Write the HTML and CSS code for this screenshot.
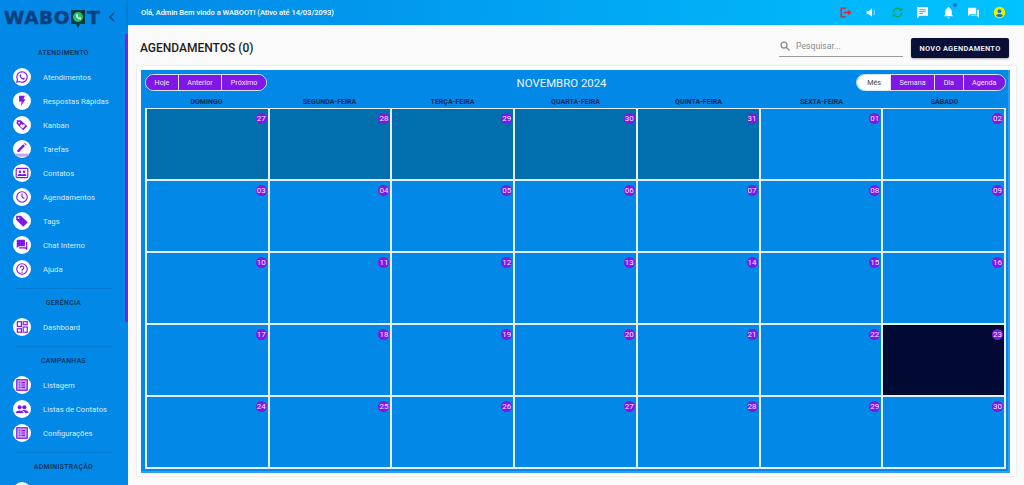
FILE: index.html
```html
<!DOCTYPE html>
<html lang="pt-BR">

<head>
    <meta charset="UTF-8">
    <meta name="viewport" content="width=device-width, initial-scale=1.0">
    <title>Agendamentos</title>
    <link rel="stylesheet" href="styles.css">
</head>

<body>
    <div class="app">
        <aside class="sidebar">
            <div class="brand">
                <span class="logo">WABO<svg class="logo-pin" viewBox="0 0 16 20"><path d="M1 1h14v14h-5l-2 4-2-4H1z" fill="#0b3b3a"/><circle cx="8" cy="8" r="5" fill="#25c26e"/><path d="M6 5.5c0 3 1.5 4.500 4.500 5l.8-1.500-1.600-.8-.7.600c-.7-.3-1.200-.8-1.500-1.500l.6-.7-.8-1.600z" fill="#fff"/></svg>T</span>
                <svg class="chevron" viewBox="0 0 8 10"><path d="M6 1 2 5l4 4" fill="none" stroke="#0b4a80" stroke-width="1.5"/></svg>
            </div>
            <div class="menu-scroll">
                <div class="menu-group first">
                    <div class="menu-title">ATENDIMENTO</div>
                    <a class="menu-item"><span class="menu-icon"><svg viewBox="0 0 24 24"><path d="M12 3a9 9 0 0 0-7.700 13.600L3 21l4.500-1.200A9 9 0 1 0 12 3z" fill="none" stroke="#8117e6" stroke-width="2"/><path d="M9 7.500c-1.500 1-1.500 2.700 0 5s3.500 4 5.500 4c1.500 0 2.500-1 2.500-2l-2.500-1.300-1 1c-1.500-.6-2.700-1.800-3.300-3.200l1-1L10 7.500z" fill="#8117e6"/></svg></span>Atendimentos</a>
                    <a class="menu-item"><span class="menu-icon"><svg viewBox="0 0 24 24"><path d="M7 3h10l-2.500 6H18l-8 12 1.500-8H7z" fill="#8117e6"/></svg></span>Respostas Rápidas</a>
                    <a class="menu-item"><span class="menu-icon"><svg viewBox="0 0 24 24"><path d="M3 10V4h7l11 10-7 7z" fill="#8117e6"/><circle cx="7" cy="8" r="1.500" fill="#fff"/><path d="M13 18l-3.500-3.500a2 2 0 0 1 3-3l.5.500.5-.5a2 2 0 0 1 3 3z" fill="#fff"/></svg></span>Kanban</a>
                    <a class="menu-item"><span class="menu-icon"><svg viewBox="0 0 24 24"><path d="M4 17v-3L14 4l3 3L7 17zM15.500 2.500l1.500-1 3 3-1 1.500z" fill="#8117e6"/><rect x="-2" y="20" width="28" height="5" fill="#c9a0f2"/></svg></span>Tarefas</a>
                    <a class="menu-item"><span class="menu-icon"><svg viewBox="0 0 24 24"><rect x="2" y="4" width="20" height="16" rx="2" fill="none" stroke="#8117e6" stroke-width="2"/><circle cx="8.500" cy="10" r="2.200" fill="#8117e6"/><circle cx="15.500" cy="10" r="2.200" fill="#8117e6"/><path d="M4.500 17c0-5 8-5 8 0zM11.500 17c0-5 8-5 8 0z" fill="#8117e6"/></svg></span>Contatos</a>
                    <a class="menu-item"><span class="menu-icon"><svg viewBox="0 0 24 24"><circle cx="12" cy="12" r="9" fill="none" stroke="#8117e6" stroke-width="2"/><path d="M12 6.500V12l4 2.500" fill="none" stroke="#8117e6" stroke-width="2"/></svg></span>Agendamentos</a>
                    <a class="menu-item"><span class="menu-icon"><svg viewBox="0 0 24 24"><path d="M2 10V3h8l12 11-8 8z" fill="#8117e6"/><circle cx="6" cy="7" r="1.600" fill="#fff"/></svg></span>Tags</a>
                    <a class="menu-item"><span class="menu-icon"><svg viewBox="0 0 24 24"><path d="M3 3h14v11H7l-4 3z" fill="#8117e6"/><path d="M19 7h2v14l-4-3H7v-2h12z" fill="#8117e6"/></svg></span>Chat Interno</a>
                    <a class="menu-item"><span class="menu-icon"><svg viewBox="0 0 24 24"><circle cx="12" cy="12" r="9" fill="none" stroke="#8117e6" stroke-width="2"/><path d="M9 10a3 3 0 1 1 4.500 2.500c-1 .6-1.500 1-1.500 2.500" fill="none" stroke="#8117e6" stroke-width="2"/><rect x="11" y="16.500" width="2" height="2" fill="#8117e6"/></svg></span>Ajuda</a>
                </div>
                <div class="menu-group">
                    <div class="menu-title">GERÊNCIA</div>
                    <a class="menu-item"><span class="menu-icon"><svg viewBox="0 0 24 24"><g fill="none" stroke="#8117e6" stroke-width="2"><rect x="4" y="3" width="7" height="8"/><rect x="14" y="3" width="7" height="5"/><rect x="4" y="15" width="7" height="6"/><rect x="14" y="12" width="7" height="9"/></g></svg></span>Dashboard</a>
                </div>
                <div class="menu-group">
                    <div class="menu-title">CAMPANHAS</div>
                    <a class="menu-item"><span class="menu-icon"><svg viewBox="0 0 24 24"><rect x="3" y="3" width="18" height="18" fill="#c9a0f2" stroke="#8117e6" stroke-width="2"/><path d="M7 8h2M11 8h6M7 12h2M11 12h6M7 16h2M11 16h6" stroke="#8117e6" stroke-width="2"/></svg></span>Listagem</a>
                    <a class="menu-item"><span class="menu-icon"><svg viewBox="0 0 24 24"><circle cx="8" cy="9" r="3.500" fill="#8117e6"/><circle cx="16" cy="9" r="3.500" fill="#8117e6"/><path d="M1 19c0-6 14-6 14 0zM12 14.500c4-1.500 11-.5 11 4.500h-6c0-2-2-3.500-5-4.500z" fill="#8117e6"/></svg></span>Listas de Contatos</a>
                    <a class="menu-item"><span class="menu-icon"><svg viewBox="0 0 24 24"><rect x="3" y="3" width="18" height="18" fill="#c9a0f2" stroke="#8117e6" stroke-width="2"/><path d="M7 8h2M11 8h6M7 12h2M11 12h6M7 16h2M11 16h6" stroke="#8117e6" stroke-width="2"/></svg></span>Configurações</a>
                </div>
                <div class="menu-group">
                    <div class="menu-title">ADMINISTRAÇÃO</div>
                    <a class="menu-item"><span class="menu-icon"></span></a>
                </div>
            </div>
        </aside>

        <div class="content">
            <header class="topbar">
                <div class="welcome">Olá, Admin Bem vindo a WABOOT! (Ativo até 14/03/2093)</div>
                <div class="top-icons">
                    <svg viewBox="0 0 24 24"><path d="M13 4H4v16h9" fill="none" stroke="#e8202c" stroke-width="2.500"/><path d="M9 12h10" stroke="#e8202c" stroke-width="2.500"/><path d="M17 7l6 5-6 5z" fill="#e8202c"/></svg>
                    <svg viewBox="0 0 24 24"><path d="M3 9v6h4l6 5V4L7 9z" fill="#eaf6ff"/><path d="M16 8c2 2 2 6 0 8" fill="none" stroke="#a8dcfa" stroke-width="2"/></svg>
                    <svg viewBox="0 0 24 24"><g fill="none" stroke="#11a04a" stroke-width="2.500"><path d="M4 12a8 8 0 0 1 14-5"/><path d="M20 12a8 8 0 0 1-14 5"/></g><path d="M15 9h6V3zM9 15H3v6z" fill="#11a04a"/></svg>
                    <svg viewBox="0 0 24 24"><path d="M2 2h20v16H7l-5 5z" fill="#fff"/><path d="M6 7h12M6 10.500h12M6 14h7" stroke="#2ca6ef" stroke-width="1.800"/></svg>
                    <span class="bell"><svg viewBox="0 0 24 24"><path d="M12 2c1 0 2 1 2 2 3 1 4 3.500 4 7v5l2 2v1H4v-1l2-2v-5c0-3.500 1-6 4-7 0-1 1-2 2-2zM10 21h4a2 2 0 0 1-4 0z" fill="#fff"/></svg><i class="dot"></i></span>
                    <svg viewBox="0 0 24 24"><path d="M2 3h15v12H6l-4 4z" fill="#fff"/><path d="M19 7h3v15l-4-4H7v-1h12z" fill="#fff"/></svg>
                    <svg viewBox="0 0 24 24"><circle cx="12" cy="12" r="10.500" fill="#eef000"/><circle cx="12" cy="9.500" r="3.500" fill="#1679c9"/><path d="M5.500 18c2-4.500 11-4.500 13 0-3.500 3.500-9.500 3.500-13 0z" fill="#1679c9"/></svg>
                </div>
            </header>

            <main class="page">
                <div class="page-head">
                    <h1>AGENDAMENTOS (0)</h1>
                    <div class="page-actions">
                        <div class="search">
                            <svg viewBox="0 0 24 24"><circle cx="10" cy="10" r="6" fill="none" stroke="#8a8a8a" stroke-width="2.500"/><path d="M14.500 14.500 21 21" stroke="#8a8a8a" stroke-width="2.500"/></svg>
                            <span>Pesquisar...</span>
                        </div>
                        <button class="btn-new">NOVO AGENDAMENTO</button>
                    </div>
                </div>

                <section class="card">
                    <div class="calendar">
                        <div class="cal-toolbar">
                            <div class="btn-group">
                                <button>Hoje</button><button>Anterior</button><button>Próximo</button>
                            </div>
                            <div class="cal-title">NOVEMBRO 2024</div>
                            <div class="btn-group">
                                <button class="active">Mês</button><button>Semana</button><button>Dia</button><button>Agenda</button>
                            </div>
                        </div>
                        <div class="cal-head">
                            <div>DOMINGO</div><div>SEGUNDA-FEIRA</div><div>TERÇA-FEIRA</div><div>QUARTA-FEIRA</div><div>QUINTA-FEIRA</div><div>SEXTA-FEIRA</div><div>SÁBADO</div>
                        </div>
                        <div class="cal-grid">
                            <div class="day off"><span>27</span></div><div class="day off"><span>28</span></div><div class="day off"><span>29</span></div><div class="day off"><span>30</span></div><div class="day off"><span>31</span></div><div class="day"><span>01</span></div><div class="day"><span>02</span></div>
                            <div class="day"><span>03</span></div><div class="day"><span>04</span></div><div class="day"><span>05</span></div><div class="day"><span>06</span></div><div class="day"><span>07</span></div><div class="day"><span>08</span></div><div class="day"><span>09</span></div>
                            <div class="day"><span>10</span></div><div class="day"><span>11</span></div><div class="day"><span>12</span></div><div class="day"><span>13</span></div><div class="day"><span>14</span></div><div class="day"><span>15</span></div><div class="day"><span>16</span></div>
                            <div class="day"><span>17</span></div><div class="day"><span>18</span></div><div class="day"><span>19</span></div><div class="day"><span>20</span></div><div class="day"><span>21</span></div><div class="day"><span>22</span></div><div class="day today"><span>23</span></div>
                            <div class="day"><span>24</span></div><div class="day"><span>25</span></div><div class="day"><span>26</span></div><div class="day"><span>27</span></div><div class="day"><span>28</span></div><div class="day"><span>29</span></div><div class="day"><span>30</span></div>
                        </div>
                    </div>
                </section>
            </main>
        </div>
    </div>
</body>

</html>
```

FILE: styles.css
```css
* {
    box-sizing: border-box;
}

html,
body {
    height: 100%;
    margin: 0;
    overflow: hidden;
}

body {
    font-family: Roboto, "Liberation Sans", sans-serif;
    color: #111;
    background-color: #fafafa;
}

.app {
    display: flex;
    height: 485px;
}

/* sidebar */
.sidebar {
    width: 128px;
    flex-shrink: 0;
    height: 100%;
    overflow: hidden;
    background-color: #0288e6;
    box-shadow: 1px 0 3px rgba(0, 0, 0, 0.25);
}

.brand {
    height: 34px;
    display: flex;
    align-items: center;
    padding-left: 4px;
}

.logo {
    width: 104px;
    display: flex;
    align-items: center;
    font-family: "DejaVu Sans", sans-serif;
    font-weight: bold;
    font-size: 18.5px;
    letter-spacing: 0.6px;
    color: #0a4080;
    -webkit-text-stroke: 0.4px #0a4080;
}

.logo-pin {
    width: 16px;
    height: 20px;
    margin: 3px 1px 0 0;
}

.chevron {
    width: 8px;
    height: 10px;
}

.menu-scroll {
    height: 451px;
    background: linear-gradient(#7a22d8, #7a22d8) no-repeat right top / 3px 288px;
    padding-top: 13px;
}

.menu-group {
    border-top: 1px solid rgba(0, 0, 0, 0.08);
    margin: 0 16px 0 15px;
    padding-top: 8px;
    padding-bottom: 7px;
}

.menu-group.first {
    border-top: none;
    padding-top: 0;
}

.menu-title {
    height: 12px;
    line-height: 12px;
    margin-bottom: 6px;
    font-size: 6.8px;
    font-weight: 500;
    letter-spacing: 0.4px;
    text-align: center;
    color: #0a3055;
}

.menu-item {
    display: flex;
    align-items: center;
    height: 24px;
    margin-left: -2px;
    font-size: 7.7px;
    white-space: nowrap;
    color: #d6eeff;
}

.menu-icon {
    width: 18px;
    height: 18px;
    margin-right: 12px;
    padding: 2px;
    flex-shrink: 0;
    border-radius: 50%;
    background-color: #fff;
    overflow: hidden;
}

.menu-icon svg {
    display: block;
    width: 14px;
    height: 14px;
    overflow: visible;
}

/* top bar */
.content {
    flex: 1;
    min-width: 0;
    display: flex;
    flex-direction: column;
}

.topbar {
    height: 25px;
    flex-shrink: 0;
    display: flex;
    align-items: center;
    justify-content: space-between;
    padding: 0 18px 0 13px;
    background: linear-gradient(90deg, #0288e6, #00c3ff);
    box-shadow: 0 1px 3px rgba(0, 0, 0, 0.3);
}

.welcome {
    font-size: 7.5px;
    font-weight: 500;
    color: #fff;
}

.top-icons {
    display: flex;
    align-items: center;
    gap: 12.6px;
}

.top-icons svg {
    display: block;
    width: 13px;
    height: 13px;
}

.bell {
    position: relative;
}

.dot {
    position: absolute;
    top: -3px;
    right: -2px;
    width: 4px;
    height: 4px;
    border-radius: 50%;
    background-color: #0b6cc4;
}

/* page */
.page {
    flex: 1;
    padding: 12px 9px 0;
    background-color: #fafafa;
}

.page-head {
    display: flex;
    align-items: center;
    justify-content: space-between;
    padding: 0 6px 0 3px;
    height: 22px;
    margin-bottom: 7px;
}

h1 {
    margin: 0;
    font-size: 12px;
    font-weight: 500;
    color: #1c1c1c;
}

.page-actions {
    display: flex;
    align-items: center;
    gap: 8px;
}

.search {
    width: 124px;
    height: 17px;
    display: flex;
    align-items: center;
    gap: 5px;
    border-bottom: 1px solid #9a9a9a;
    font-size: 8.7px;
    color: #8c8c8c;
    padding-bottom: 3px;
}

.search svg {
    width: 12px;
    height: 12px;
}

.btn-new {
    width: 98px;
    height: 20px;
    border: none;
    border-radius: 2px;
    padding: 0;
    font-family: inherit;
    font-size: 7.4px;
    font-weight: 700;
    letter-spacing: 0.3px;
    color: #e8e8f0;
    background-color: #0a0f38;
    box-shadow: 0 1px 2px rgba(0, 0, 0, 0.3);
}

.card {
    width: 879px;
    height: 410px;
    padding: 4px 6px 3px 4px;
    background-color: #fff;
    box-shadow: 0 0 2px rgba(0, 0, 0, 0.15);
}

.calendar {
    height: 100%;
    padding: 4px 2px 4px 4px;
    background-color: #0288e6;
    border-right: 2px solid #2ba0f0;
    border-bottom: 2px solid #2ba0f0;
}

.cal-toolbar {
    display: flex;
    align-items: center;
    justify-content: space-between;
    height: 17px;
}

.cal-title {
    font-size: 11.4px;
    color: #eaf6ff;
}

.btn-group {
    display: flex;
    height: 17px;
    border: 1px solid #d8e4f5;
    border-radius: 9px;
    overflow: hidden;
}

.btn-group button {
    height: 100%;
    border: none;
    border-left: 1px solid #d8e4f5;
    padding: 0 8.5px;
    font-family: inherit;
    font-size: 7.2px;
    color: #efe4fc;
    background-color: #8117e6;
}

.btn-group button:first-child {
    border-left: none;
}

.btn-group .active {
    padding: 0 9px 0 10px;
    color: #444;
    background-color: #fff;
}

.cal-head {
    display: grid;
    grid-template-columns: repeat(7, 1fr);
    height: 17px;
    padding: 6px 0 0;
    font-size: 7px;
    font-weight: 700;
    line-height: 11px;
    text-align: center;
    color: #0a2a55;
}

.cal-grid {
    display: grid;
    grid-template-columns: repeat(7, 1fr);
    grid-auto-rows: 72px;
    width: 861px;
    border-top: 1px solid #e6eef5;
    border-left: 2px solid #e6eef5;
}

.day {
    display: flex;
    justify-content: flex-end;
    padding: 4px 1px 0 0;
    background-color: #0288e6;
    border-right: 2px solid #e6eef5;
    border-bottom: 2px solid #e6eef5;
}

.day.off {
    background-color: #016fae;
}

.day.today {
    background-color: #000a33;
}

.day span {
    width: 11px;
    height: 11px;
    border-radius: 50%;
    font-size: 8px;
    line-height: 11px;
    text-align: center;
    color: #efe4fc;
    background-color: #8117e6;
}
```
